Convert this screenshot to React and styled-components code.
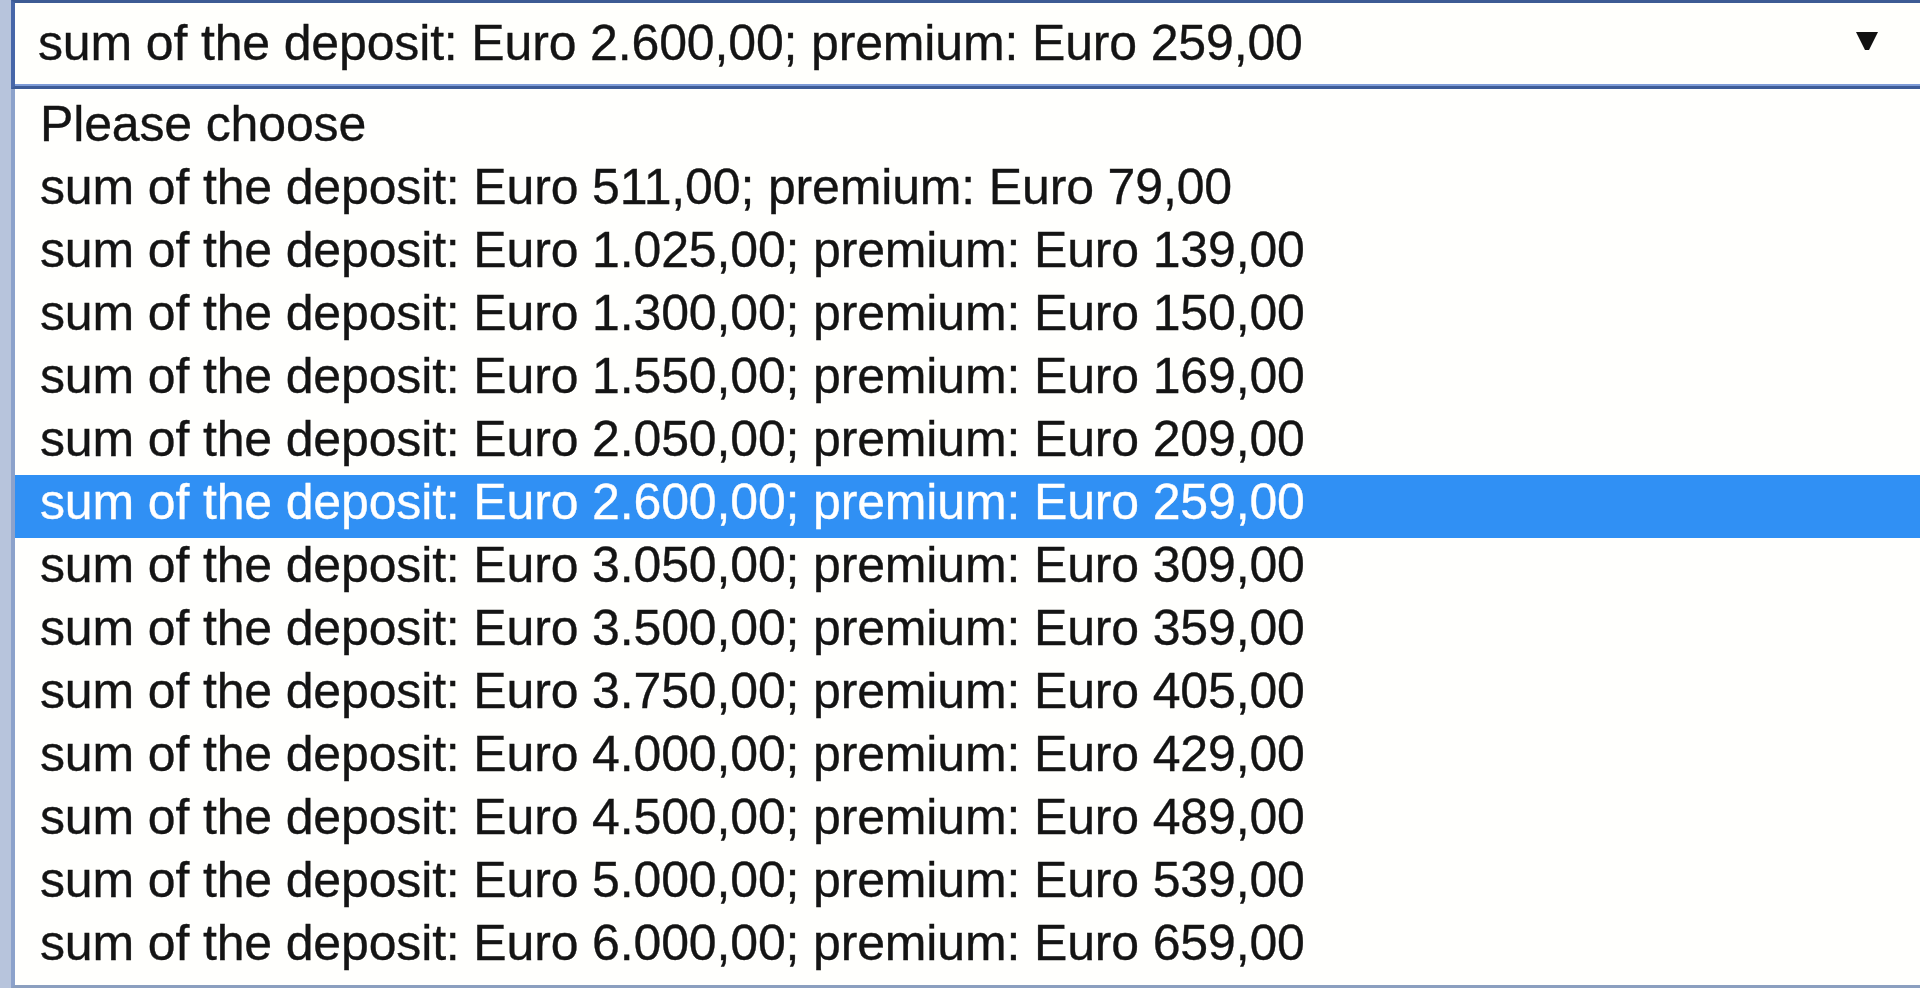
import React from 'react';
import styled, { createGlobalStyle } from 'styled-components';

const GlobalStyle = createGlobalStyle`
  html, body {
    margin: 0;
    padding: 0;
    background: #b7c4dc;
    overflow: hidden;
  }
`;

const Page = styled.div`
  width: 1920px;
  height: 988px;
  padding-left: 11px;
  box-sizing: border-box;
  display: flex;
  flex-direction: column;
  font-family: 'Liberation Sans', Arial, sans-serif;
  font-size: 50px;
  letter-spacing: -0.15px;
  -webkit-text-stroke: 0.35px currentColor;
  color: #141414;
`;

const SelectBox = styled.div`
  height: 89px;
  box-sizing: border-box;
  display: flex;
  align-items: center;
  justify-content: space-between;
  padding: 0 42px 0 23px;
  background: #fffffc;
  border-top: 3px solid #3d5b93;
  border-left: 4px solid #4767a8;
  border-bottom: 3px solid #3d5c97;
  box-shadow: inset 0 -2px 0 #7d9bd6;
`;

const SelectValue = styled.span`
  line-height: 1;
  padding-bottom: 4px;
`;

const Arrow = styled.svg`
  width: 22px;
  height: 22px;
  margin-bottom: 8px;
`;

const List = styled.ul`
  flex: 1;
  margin: 0;
  padding: 8px 0 6px;
  list-style: none;
  background: #fffffd;
  border-left: 4px solid #8ca2cb;
  border-bottom: 3px solid #8b9fbf;
  box-sizing: border-box;
`;

const Option = styled.li`
  height: 63px;
  line-height: 54px;
  padding-left: 25px;
  white-space: nowrap;
  background: ${({ selected }) => (selected ? '#3090f4' : 'transparent')};
  color: ${({ selected }) => (selected ? '#ffffff' : '#141414')};
`;

const deposits = [
  ['511,00', '79,00'],
  ['1.025,00', '139,00'],
  ['1.300,00', '150,00'],
  ['1.550,00', '169,00'],
  ['2.050,00', '209,00'],
  ['2.600,00', '259,00'],
  ['3.050,00', '309,00'],
  ['3.500,00', '359,00'],
  ['3.750,00', '405,00'],
  ['4.000,00', '429,00'],
  ['4.500,00', '489,00'],
  ['5.000,00', '539,00'],
  ['6.000,00', '659,00'],
];

const label = ([sum, premium]) => `sum of the deposit: Euro ${sum}; premium: Euro ${premium}`;

const selectedIndex = 5;

export default function App() {
  return (
    <>
      <GlobalStyle />
      <Page>
        <SelectBox>
          <SelectValue>{label(deposits[selectedIndex])}</SelectValue>
          <Arrow viewBox="0 0 22 22">
            <polygon points="0,2 22,2 13,20 9,20" fill="#111" />
          </Arrow>
        </SelectBox>
        <List>
          <Option>Please choose</Option>
          {deposits.map((d, i) => (
            <Option key={d[0]} selected={i === selectedIndex}>
              {label(d)}
            </Option>
          ))}
        </List>
      </Page>
    </>
  );
}
